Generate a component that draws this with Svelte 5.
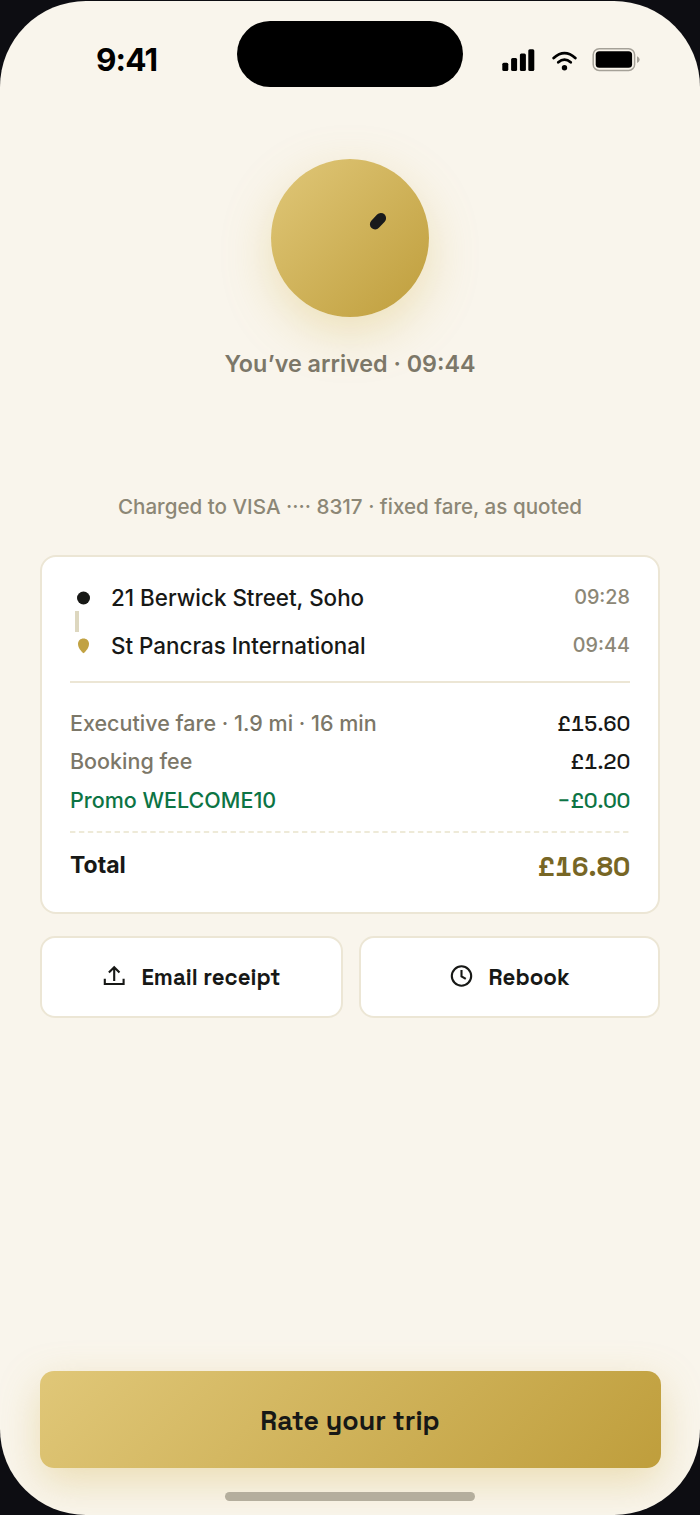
<script lang="ts">
  interface Fare {
    label: string;
    amount: string;
    kind?: string;
  }

  const fares: Fare[] = [
    { label: 'Executive fare · 1.9 mi · 16 min', amount: '£15.60', kind: 'ride' },
    { label: 'Booking fee', amount: '£1.20', kind: 'fee' },
    { label: 'Promo WELCOME10', amount: '−£0.00', kind: 'promo' },
  ];
</script>

<div class="device">
  <div class="screen">
    <header class="status-bar">
      <span class="clock">9:41</span>
      <div class="island"></div>
      <div class="status-icons">
        <svg class="signal" width="33" height="22" viewBox="0 0 33 22" fill="#000">
          <rect x="0.3" y="13.7" width="6" height="8.2" rx="1.5" />
          <rect x="9.1" y="9" width="6" height="12.9" rx="1.5" />
          <rect x="17.9" y="4.6" width="6" height="17.3" rx="1.5" />
          <rect x="26.3" y="0.2" width="6" height="21.7" rx="1.5" />
        </svg>
        <svg class="wifi" width="26" height="20" viewBox="0 0 26 20" fill="none" stroke="#000" stroke-width="2.8" stroke-linecap="round">
          <path d="M1.7 7Q12.5 -2.7 23.3 7" />
          <path d="M6.3 11.3Q12.5 6 18.7 11.3" />
          <circle cx="12.5" cy="16.7" r="2.7" fill="#000" stroke="none" />
        </svg>
        <svg class="battery" width="48" height="24" viewBox="0 0 48 24">
          <rect x="1.2" y="0.8" width="41.4" height="21.6" rx="6" fill="none" stroke="#a5a198" stroke-width="1.5" />
          <rect x="3.7" y="3.2" width="36.4" height="16.6" rx="3.6" fill="#000" />
          <path d="M45 8.2c3.5 1.5 3.5 5.3 0 6.8z" fill="#a5a198" />
        </svg>
      </div>
    </header>

    <main>
      <section class="arrival">
        <div class="medallion">
          <svg width="158" height="158" viewBox="0 0 158 158" fill="none">
            <path d="M104.1 65.3L109.9 59.1" stroke="#191a1c" stroke-width="10.4" stroke-linecap="round" />
          </svg>
        </div>
        <p class="arrived">You’ve arrived · 09:44</p>
      </section>

      <p class="charged">Charged to VISA ···· 8317 · fixed fare, as quoted</p>

      <section class="receipt">
        <div class="stop">
          <svg class="marker" width="27" height="20" viewBox="0 0 27 20">
            <circle cx="13.5" cy="10" r="6.5" fill="#171816" />
          </svg>
          <span class="place">21 Berwick Street, Soho</span>
          <time>09:28</time>
        </div>
        <div class="connector"></div>
        <div class="stop">
          <svg class="marker" width="27" height="20" viewBox="0 0 27 20">
            <path d="M13.5 2.5C10.4 2.5 8 4.7 8 7.9c0 3.6 2.9 7 5.5 9.3 2.6-2.3 5.5-5.7 5.5-9.3C19 4.7 16.6 2.5 13.5 2.5z" fill="#c1a243" />
          </svg>
          <span class="place">St Pancras International</span>
          <time>09:44</time>
        </div>

        <hr />

        <div class="fares">
          {#each fares as fare}
            <div class="fare {fare.kind}">
              <span>{fare.label}</span>
              <span class="amount">{fare.amount}</span>
            </div>
          {/each}
        </div>

        <svg class="dashes" width="560" height="2" viewBox="0 0 560 2">
          <path d="M0 1H560" stroke="#e9e3cc" stroke-width="1.7" stroke-dasharray="5.4 3.52" />
        </svg>

        <div class="total">
          <span>Total</span>
          <span class="sum">£16.80</span>
        </div>
      </section>

      <div class="actions">
        <button>
          <svg width="24" height="24" viewBox="0 0 24 24" fill="none" stroke="currentColor" stroke-width="2.1">
            <path d="M11.2 16V2.3M5.9 7.6L11.2 2.2l5.3 5.4M1.8 13.8v5.2h18.8v-5.2" />
          </svg>
          <span>Email receipt</span>
        </button>
        <button>
          <svg width="24" height="24" viewBox="0 0 24 24" fill="none" stroke="currentColor" stroke-width="2.1">
            <circle cx="12.5" cy="11" r="9.7" />
            <path d="M12.5 5v6.3l4.3 2.6" />
          </svg>
          <span>Rebook</span>
        </button>
      </div>
    </main>

    <footer>
      <button class="rate"><span>Rate your trip</span></button>
      <div class="home-indicator"></div>
    </footer>
  </div>
</div>

<style>
  :global(body) {
    background: #0d0d12;
  }

  .device {
    width: 700px;
    height: 1515px;
    overflow: hidden;
    background: #0d0d12;
    color: #171816;
  }

  .screen {
    box-sizing: border-box;
    display: flex;
    flex-direction: column;
    height: 1514px;
    margin-top: 1px;
    overflow: hidden;
    border-radius: 86px;
    background: #f9f5ec;
    font-family: Inter, 'Liberation Sans', sans-serif;
  }

  .status-bar {
    display: grid;
    grid-template-columns: 237px 226px 237px;
    height: 106px;
    padding-top: 20px;
    box-sizing: border-box;
  }

  .clock {
    padding: 19px 0 0 96px;
    color: #000;
    font-size: 31.5px;
    line-height: 40px;
    font-weight: 700;
    letter-spacing: -0.9px;
  }

  .island {
    height: 66px;
    border-radius: 33px;
    background: #000;
  }

  .status-icons {
    display: flex;
    align-items: flex-start;
    padding: 28px 0 0 39px;
  }

  .wifi {
    margin: 2px 0 0 17px;
  }

  .battery {
    margin: -1px 0 0 14px;
  }

  main {
    padding: 0 40px;
  }

  p {
    margin: 0;
    text-align: center;
  }

  .arrival {
    display: flex;
    flex-direction: column;
    align-items: center;
    padding-top: 52px;
  }

  .medallion {
    width: 158px;
    height: 158px;
    border-radius: 50%;
    background: linear-gradient(135deg, #e0c778, #bf9e3c);
    box-shadow: 0 16px 48px rgba(215, 185, 85, 0.34);
  }

  .arrived {
    margin-top: 32px;
    color: #7c7768;
    font-size: 23.3px;
    line-height: 30px;
    font-weight: 600;
  }

  .charged {
    margin-top: 115px;
    color: #8c8776;
    font-size: 20.6px;
    line-height: 26px;
    font-weight: 450;
  }

  .receipt {
    box-sizing: border-box;
    height: 359px;
    margin-top: 35px;
    padding: 27px 28px 0;
    border: 2px solid #ece6d5;
    border-radius: 16px;
    background: #fff;
  }

  .stop {
    display: flex;
    align-items: center;
    height: 27px;
  }

  .marker {
    margin-right: 14px;
  }

  .place {
    flex: 1;
    font-size: 22.4px;
    font-weight: 500;
  }

  time {
    margin-top: -1px;
    color: #8c8776;
    font-size: 19.8px;
    font-weight: 450;
  }

  .connector {
    width: 4px;
    height: 21px;
    margin-left: 5px;
    background: #ddd7bf;
  }

  hr {
    height: 2px;
    margin: 22px 0 0;
    border: 0;
    background: #ece6d5;
  }

  .fares {
    padding-top: 21px;
  }

  .fare {
    display: flex;
    align-items: center;
    justify-content: space-between;
    height: 38px;
    color: #7c7768;
    font-size: 21.5px;
    font-weight: 450;
  }

  .fare.promo {
    height: 40px;
    color: #0c7444;
  }

  .amount {
    color: #171816;
    font-family: 'Space Grotesk', Inter, sans-serif;
    font-variant-numeric: tabular-nums;
    font-weight: 550;
  }

  .promo .amount {
    color: #0c7444;
  }

  .dashes {
    display: block;
    margin-top: 11px;
  }

  .total {
    display: flex;
    align-items: center;
    justify-content: space-between;
    height: 34px;
    margin-top: 15px;
    font-size: 23px;
    font-weight: 700;
  }

  .sum {
    margin-top: 3px;
    color: #776625;
    font-family: 'Space Grotesk', Inter, sans-serif;
    font-size: 27px;
    font-variant-numeric: tabular-nums;
  }

  .actions {
    display: grid;
    grid-template-columns: 303px 301px;
    gap: 16px;
    margin-top: 22px;
  }

  button {
    display: flex;
    align-items: center;
    justify-content: center;
    gap: 15px;
    height: 82px;
    padding: 0;
    border: 2px solid #ece6d5;
    border-radius: 15px;
    background: #fff;
    color: #171816;
    font-family: 'Space Grotesk', Inter, sans-serif;
    font-size: 22.3px;
    font-weight: 600;
  }

  footer {
    display: flex;
    flex-direction: column;
    align-items: center;
    margin-top: auto;
    padding: 0 39px 14px;
  }

  .rate {
    width: 621px;
    height: 97px;
    padding-top: 2px;
    border: 0;
    border-radius: 14px;
    background: linear-gradient(135deg, #e0c778, #bf9e3c);
    box-shadow: 0 14px 40px rgba(210, 178, 75, 0.35);
    font-size: 26.8px;
  }

  .home-indicator {
    z-index: 1;
    width: 250px;
    height: 9px;
    margin-top: 24px;
    border-radius: 5px;
    background: #b4ae9d;
  }
</style>
